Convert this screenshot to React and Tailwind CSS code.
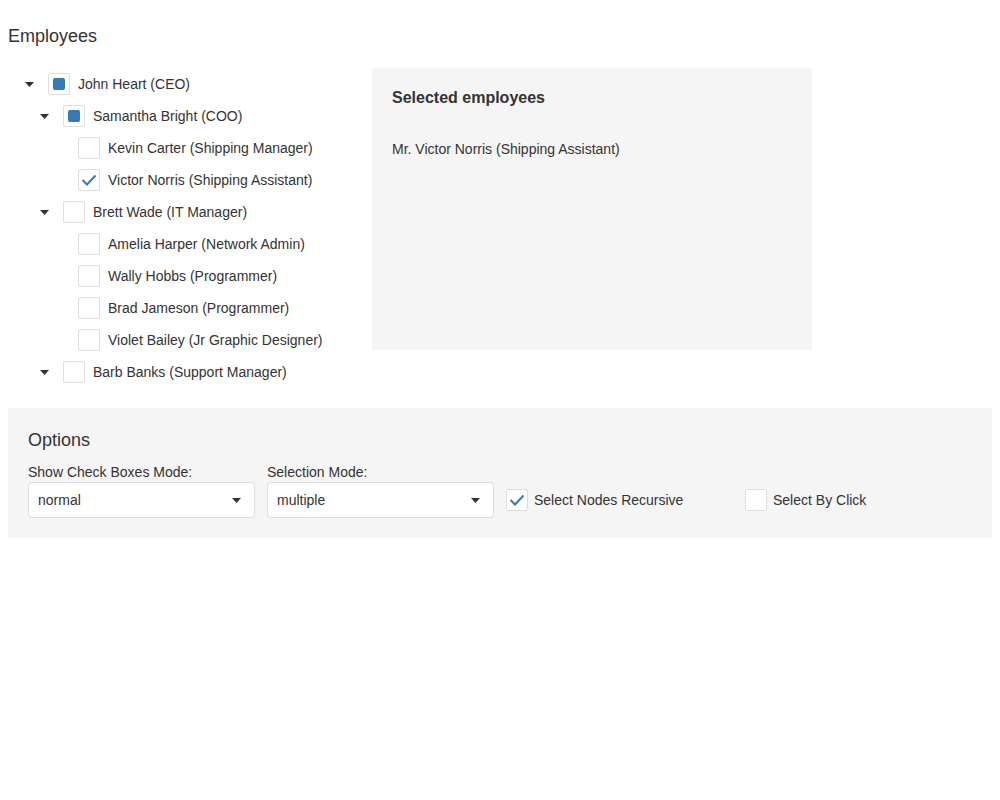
import React from 'react';

const font = { fontFamily: '"Liberation Sans", Arial, sans-serif' };

const employees = [
  { name: 'John Heart (CEO)', level: 0, expander: true, state: 'partial' },
  { name: 'Samantha Bright (COO)', level: 1, expander: true, state: 'partial' },
  { name: 'Kevin Carter (Shipping Manager)', level: 2, state: 'off' },
  { name: 'Victor Norris (Shipping Assistant)', level: 2, state: 'on' },
  { name: 'Brett Wade (IT Manager)', level: 1, expander: true, state: 'off' },
  { name: 'Amelia Harper (Network Admin)', level: 2, state: 'off' },
  { name: 'Wally Hobbs (Programmer)', level: 2, state: 'off' },
  { name: 'Brad Jameson (Programmer)', level: 2, state: 'off' },
  { name: 'Violet Bailey (Jr Graphic Designer)', level: 2, state: 'off' },
  { name: 'Barb Banks (Support Manager)', level: 1, expander: true, state: 'off' }
];

const indent = ['pl-[12px]', 'pl-[27px]', 'pl-[42px]'];

const Caret = () => (
  <svg width="9" height="5" viewBox="0 0 9 5">
    <path d="M0 0 L9 0 L4.5 5 Z" fill="#333" />
  </svg>
);

const CheckBox = ({ state }) => (
  <div className="w-[22px] h-[22px] shrink-0 bg-white border border-[#dddddd] rounded-[2px] flex items-center justify-center">
    {state === 'partial' && <div className="w-[12px] h-[12px] bg-[#337ab7] rounded-[2px]" />}
    {state === 'on' && (
      <svg width="16" height="12" viewBox="0 0 16 12">
        <path d="M1.5 6 L6 10.5 L14.5 1.5" fill="none" stroke="#337ab7" strokeWidth="2" />
      </svg>
    )}
  </div>
);

const SelectBox = ({ value }) => (
  <div className="w-[227px] h-[36px] bg-white border border-[#dddddd] rounded-[4px] flex items-center justify-between pl-[9px] pr-[13px]">
    <span>{value}</span>
    <Caret />
  </div>
);

export default function App() {
  return (
    <div className="bg-white text-[#333333] text-[14px] min-h-[800px] px-[8px]" style={font}>
      <div className="pt-[26px] text-[18px] leading-[20px]">Employees</div>

      <div className="flex mt-[22px]">
        <div className="w-[364px]">
          {employees.map(e => (
            <div key={e.name} className={`h-[32px] flex items-center ${indent[e.level]}`}>
              <div className="w-[18px] flex justify-center">{e.expander && <Caret />}</div>
              <div className="ml-[10px]"><CheckBox state={e.state} /></div>
              <span className="ml-[8px]">{e.name}</span>
            </div>
          ))}
        </div>
        <div className="w-[440px] h-[282px] bg-[#f5f5f5] px-[20px] pt-[20px]">
          <div className="text-[16px] font-bold leading-[20px]">Selected employees</div>
          <div className="mt-[32px] leading-[18px]">Mr. Victor Norris (Shipping Assistant)</div>
        </div>
      </div>

      <div className="mt-[20px] bg-[#f5f5f5] px-[20px] pt-[20px] pb-[20px]">
        <div className="text-[18px] leading-[24px]">Options</div>
        <div className="flex items-end gap-[12px] mt-[11px]">
          <div>
            <div className="leading-[18px] mb-px">Show Check Boxes Mode:</div>
            <SelectBox value="normal" />
          </div>
          <div>
            <div className="leading-[18px] mb-px">Selection Mode:</div>
            <SelectBox value="multiple" />
          </div>
          <div className="h-[36px] flex items-center w-[227px]">
            <CheckBox state="on" />
            <span className="ml-[6px]">Select Nodes Recursive</span>
          </div>
          <div className="h-[36px] flex items-center">
            <CheckBox state="off" />
            <span className="ml-[6px]">Select By Click</span>
          </div>
        </div>
      </div>
    </div>
  );
}
